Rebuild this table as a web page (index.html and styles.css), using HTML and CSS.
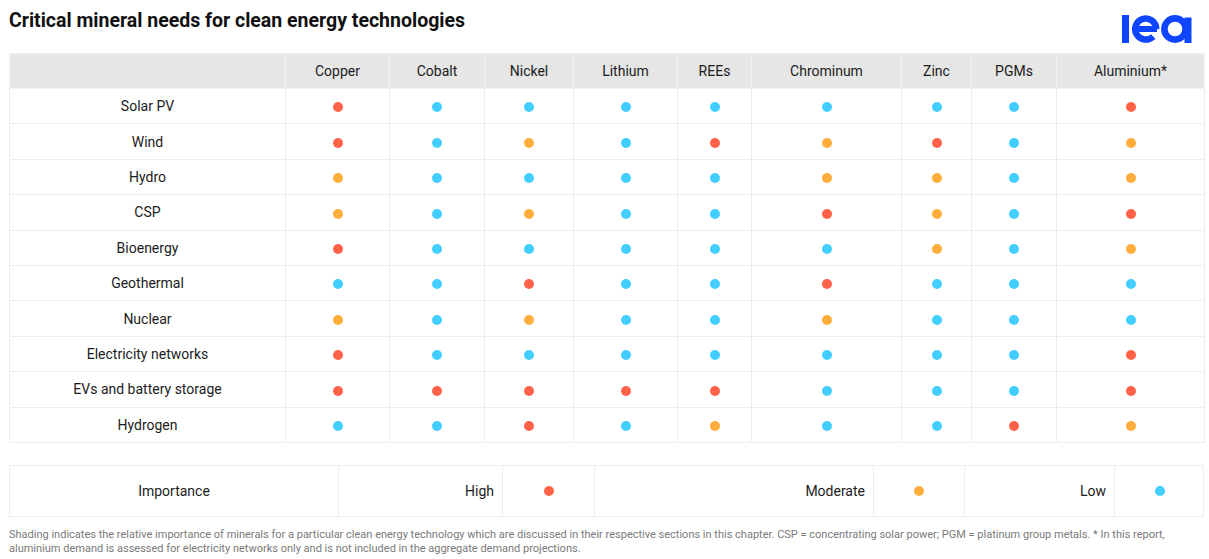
FILE: index.html
```html
<!DOCTYPE html>
<html lang="en">
<head>
<meta charset="utf-8">
<title>Critical mineral needs for clean energy technologies</title>
<link rel="stylesheet" href="styles.css">
</head>
<body>
<div class="page">
  <header class="top">
    <h1 class="title">Critical mineral needs for clean energy technologies</h1>
    <svg class="logo" width="70" height="28" viewBox="0 0 70 28" aria-label="iea">
      <rect x="0" y="0" width="7" height="28" fill="#0f45ff"/>
      <rect x="13" y="11" width="22" height="6" fill="#0f45ff"/>
      <path d="M34.2,14 A10.5,10.5 0 1 0 31.2,21.4" fill="none" stroke="#0f45ff" stroke-width="6.5"/>
      <circle cx="53" cy="14" r="10.6" fill="none" stroke="#0f45ff" stroke-width="6.6"/>
      <rect x="62.5" y="2.5" width="7" height="25.5" fill="#0f45ff"/>
    </svg>
  </header>

  <table class="matrix">
    <colgroup>
      <col style="width:276px"><col style="width:104px"><col style="width:95px"><col style="width:89px"><col style="width:104px"><col style="width:74px"><col style="width:150px"><col style="width:70px"><col style="width:85px"><col style="width:148px">
    </colgroup>
    <thead>
      <tr><th></th><th>Copper</th><th>Cobalt</th><th>Nickel</th><th>Lithium</th><th>REEs</th><th>Chrominum</th><th>Zinc</th><th>PGMs</th><th>Aluminium*</th></tr>
    </thead>
    <tbody id="rows"></tbody>
  </table>

  <div class="legend">
    <div class="lg-cell lg-title">Importance</div>
    <div class="lg-cell lg-label">High</div>
    <div class="lg-cell lg-dot"><span class="dot r"></span></div>
    <div class="lg-cell lg-label">Moderate</div>
    <div class="lg-cell lg-dot"><span class="dot o"></span></div>
    <div class="lg-cell lg-label">Low</div>
    <div class="lg-cell lg-dot"><span class="dot b"></span></div>
  </div>

  <p class="note">Shading indicates the relative importance of minerals for a particular clean energy technology which are discussed in their respective sections in this chapter. CSP = concentrating solar power; PGM = platinum group metals. * In this report,<br>aluminium demand is assessed for electricity networks only and is not included in the aggregate demand projections.</p>
</div>
<script src="app.js"></script>
</body>
</html>
```
FILE: app.js
```javascript
var data = [
  ["Solar PV", "rbbbbbbbr"],
  ["Wind", "rbobrorbo"],
  ["Hydro", "obbbboobo"],
  ["CSP", "obobbrobr"],
  ["Bioenergy", "rbbbbbobo"],
  ["Geothermal", "bbrbbrbbb"],
  ["Nuclear", "obobbobbb"],
  ["Electricity networks", "rbbbbbbbr"],
  ["EVs and battery storage", "rrrrrbbbr"],
  ["Hydrogen", "bbrbobbro"]
];
var tbody = document.getElementById("rows");
data.forEach(function (row) {
  var tr = document.createElement("tr");
  var th = document.createElement("td");
  th.className = "tech";
  th.textContent = row[0];
  tr.appendChild(th);
  row[1].split("").forEach(function (c) {
    var td = document.createElement("td");
    var s = document.createElement("span");
    s.className = "dot " + c;
    td.appendChild(s);
    tr.appendChild(td);
  });
  tbody.appendChild(tr);
});
```
FILE: styles.css
```css
html, body {
  margin: 0;
  padding: 0;
  background: #ffffff;
}
body {
  font-family: Roboto, "Liberation Sans", sans-serif;
  color: #1c1c1c;
}
.page {
  padding: 0 5px 0 9px;
}
.top {
  height: 53px;
  display: flex;
  justify-content: space-between;
  align-items: flex-start;
}
.title {
  margin: 0;
  padding-top: 10px;
  font-size: 19.5px;
  line-height: 22px;
  font-weight: 700;
  color: #111;
  letter-spacing: 0;
}
.logo {
  margin-top: 15px;
  margin-right: 12px;
}
.matrix {
  width: 1195px;
  table-layout: fixed;
  border-collapse: collapse;
  font-size: 14px;
}
.matrix th, .matrix td {
  border: 1px solid #ededed;
  text-align: center;
  padding: 0;
}
.matrix thead th {
  background: #e6e6e6;
  font-weight: 400;
  height: 34px;
  border-color: #f2f2f2;
}
.matrix tbody td {
  height: 34.4px;
}
.dot {
  display: inline-block;
  width: 10px;
  height: 10px;
  border-radius: 50%;
  vertical-align: middle;
}
.dot.r { background: #ff6248; }
.dot.o { background: #ffae3b; }
.dot.b { background: #42cefe; }
.legend {
  margin-top: 22px;
  width: 1195px;
  height: 52px;
  display: grid;
  grid-template-columns: 328px 164px 92px 279px 91px 150px 91px;
  border: 1px solid #ededed;
  box-sizing: border-box;
  font-size: 14px;
}
.lg-cell {
  display: flex;
  align-items: center;
  border-left: 1px solid #ededed;
}
.lg-cell:first-child { border-left: none; }
.lg-title { justify-content: center; }
.lg-label { justify-content: flex-end; padding-right: 8px; }
.lg-dot { justify-content: center; }
.note {
  margin: 11px 0 0;
  font-size: 11px;
  line-height: 14px;
  color: #7a7a7a;
  white-space: nowrap;
}
```
